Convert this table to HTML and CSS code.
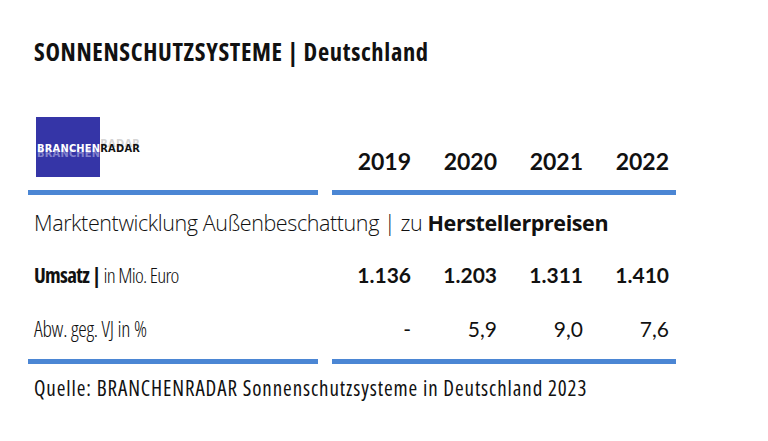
FILE: index.html
```html
<!DOCTYPE html>
<html lang="de">
<head>
<meta charset="utf-8">
<title>Sonnenschutzsysteme Deutschland</title>
<link rel="stylesheet" href="styles.css">
</head>
<body>
<div class="page">
  <h1 class="title">SONNENSCHUTZSYSTEME | Deutschland</h1>
  <div class="table">
    <div class="row head">
      <div class="label">
        <div class="logo"><span class="logo-a">BRANCHEN</span><span class="logo-b">RADAR</span></div>
      </div>
      <div class="vals years">
        <span>2019</span><span>2020</span><span>2021</span><span>2022</span>
      </div>
    </div>
    <div class="rules"><span></span><span></span></div>
    <div class="subtitle">Marktentwicklung Außenbeschattung | zu <b>Herstellerpreisen</b></div>
    <div class="row data first">
      <div class="label"><b>Umsatz |</b> in Mio. Euro</div>
      <div class="vals bold"><span>1.136</span><span>1.203</span><span>1.311</span><span>1.410</span></div>
    </div>
    <div class="row data pct">
      <div class="label">Abw. geg. VJ in %</div>
      <div class="vals"><span>-</span><span>5,9</span><span>9,0</span><span>7,6</span></div>
    </div>
    <div class="rules bottom"><span></span><span></span></div>
    <div class="source">Quelle: BRANCHENRADAR Sonnenschutzsysteme in Deutschland 2023</div>
  </div>
</div>
</body>
</html>
```

FILE: styles.css
```css
html, body {
  margin: 0;
  padding: 0;
  background: #ffffff;
}
body {
  width: 768px;
  height: 441px;
  overflow: hidden;
  color: #111111;
  font-family: "Open Sans", "Liberation Sans", sans-serif;
}
.page {
  padding: 35px 0 0 28px;
}
.title {
  margin: 0 0 0 6px;
  font-size: 24.5px;
  line-height: 34px;
  font-weight: 700;
  font-stretch: 75%;
  letter-spacing: 0.65px;
}
.table {
  margin-top: 48px;
  width: 648px;
}
.row {
  display: grid;
  grid-template-columns: 290px 344px;
  column-gap: 14px;
  align-items: end;
}
.label {
  padding-left: 6px;
  font-stretch: 75%;
  white-space: nowrap;
}
.vals {
  display: grid;
  grid-template-columns: repeat(4, 86px);
  text-align: right;
  font-family: "Lato", "Liberation Sans", sans-serif;
}
.vals span {
  padding-right: 7px;
}
.head {
  height: 60px;
}
.logo {
  width: 64px;
  height: 60px;
  margin-left: 2px;
  background: #3535a7;
  box-sizing: border-box;
  padding: 26px 0 0 1px;
  white-space: nowrap;
  font-family: "DejaVu Sans", sans-serif;
  font-weight: 700;
  font-size: 11px;
  line-height: 11px;
  letter-spacing: 0.2px;
}
.logo-a {
  color: #ffffff;
  text-shadow: 0 5px 0 rgba(200, 200, 240, 0.55);
}
.logo-b {
  color: #111111;
  text-shadow: 0 -5px 0 rgba(160, 160, 160, 0.45);
}
.years {
  font-size: 23px;
  font-weight: 700;
  line-height: 28px;
  padding-bottom: 2px;
}
.rules {
  display: grid;
  grid-template-columns: 290px 344px;
  column-gap: 14px;
  height: 5px;
  margin-top: 13px;
}
.rules.bottom {
  margin-top: 16px;
}
.rules span {
  background: #4b86d4;
}
.subtitle {
  padding-left: 6px;
  margin-top: 13px;
  font-size: 21.5px;
  line-height: 30px;
  font-weight: 300;
  letter-spacing: -0.4px;
  white-space: nowrap;
}
.subtitle b {
  font-weight: 700;
}
.data {
  height: 54px;
  font-size: 20px;
}
.data.first {
  height: 51px;
}
.data .label {
  font-weight: 400;
  line-height: 28px;
}
.data.first .label {
  font-size: 21px;
  font-weight: 300;
  letter-spacing: -0.7px;
}
.data .label b {
  font-weight: 700;
}
.data .vals {
  font-size: 21px;
  line-height: 28px;
}
.bold {
  font-weight: 700;
}
.pct .label {
  font-size: 21.5px;
  font-weight: 300;
  letter-spacing: -0.25px;
}
.source {
  padding-left: 6px;
  margin-top: 11px;
  font-size: 21px;
  line-height: 26px;
  font-weight: 400;
  font-stretch: 75%;
  letter-spacing: 0.9px;
  white-space: nowrap;
}
```
